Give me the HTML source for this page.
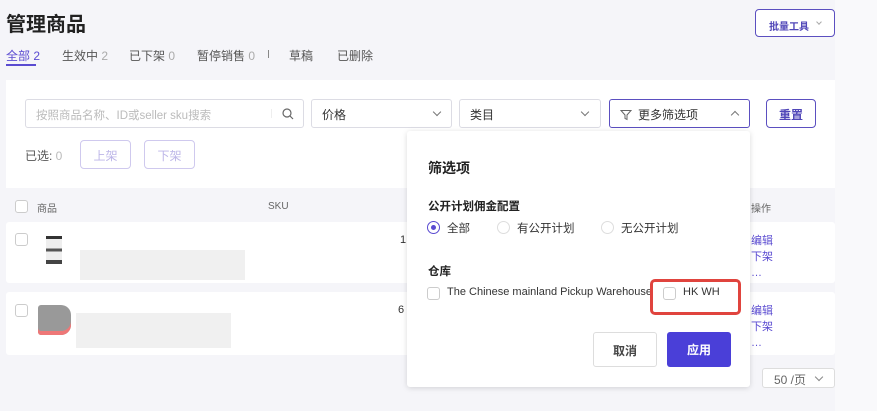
<!DOCTYPE html>
<html><head><meta charset="utf-8"><style>
*{box-sizing:border-box;margin:0;padding:0}
body{width:877px;height:411px;background:#f5f5f9;font-family:"Liberation Sans","Noto Sans CJK SC",sans-serif;color:#333;position:relative;overflow:hidden;font-size:12px}
.a{position:absolute;white-space:nowrap}
.box{position:absolute;border:1px solid #dcdce4;border-radius:3px;background:#fff}
.chev{position:absolute;width:6px;height:6px;border-right:1px solid #777;border-bottom:1px solid #777;transform:rotate(45deg)}
.cb{position:absolute;width:13px;height:13px;border:1px solid #ccc;border-radius:3px;background:#fff}
.purple{color:#5a4bd1}
</style></head><body>
<div class="a" style="left:835px;top:0;width:42px;height:411px;background:#f9f9fb"></div>
<div class="a" style="left:6px;top:8px;font-size:20px;font-weight:bold;color:#222">管理商品</div>
<div class="a" style="left:755px;top:9px;width:80px;height:28px;border:1px solid #5b4fc0;border-radius:4px;background:#fff;color:#5046b8;font-size:10px;font-weight:bold;padding:8px 0 0 13px">批量工具</div>
<span class="chev" style="left:817px;top:20px;width:4px;height:4px;border-color:#aaa"></span>
<div class="a" style="top:47px;left:6px;font-size:12px;color:#5a4bd1">全部<span style="color:#5a4bd1"> 2</span></div>
<div class="a" style="left:6px;top:64px;width:30px;height:2px;background:#5a4bd1"></div>
<div class="a" style="top:47px;left:62px;color:#555">生效中<span style="color:#aaa"> 2</span></div>
<div class="a" style="top:47px;left:129px;color:#555">已下架<span style="color:#aaa"> 0</span></div>
<div class="a" style="top:47px;left:197px;color:#555">暂停销售<span style="color:#aaa"> 0</span></div>
<div class="a" style="top:50px;left:268px;width:1px;height:8px;background:#888"></div>
<div class="a" style="top:47px;left:289px;color:#555">草稿</div>
<div class="a" style="top:47px;left:337px;color:#555">已删除</div>

<div class="a" style="left:6px;top:80px;width:829px;height:108px;background:#fff"></div>
<div class="box" style="left:25px;top:99px;width:279px;height:29px"><span class="a" style="left:10px;top:7px;color:#bbb;font-size:11.5px">按照商品名称、ID或seller sku搜索</span>
<span class="a" style="left:245px;top:9px;width:1px;height:9px;background:#eee"></span>
<svg class="a" style="left:256px;top:8px" width="12" height="12" viewBox="0 0 12 12" fill="none" stroke="#666" stroke-width="1.2"><circle cx="5" cy="5" r="4"/><path d="M8 8l3 3"/></svg></div>
<div class="box" style="left:311px;top:99px;width:141px;height:29px"><span class="a" style="left:10px;top:6px">价格</span><span class="chev" style="left:122px;top:9px"></span></div>
<div class="box" style="left:459px;top:99px;width:142px;height:29px"><span class="a" style="left:10px;top:6px">类目</span><span class="chev" style="left:122px;top:9px"></span></div>
<div class="box" style="left:609px;top:99px;width:141px;height:29px;border-color:#5b4fc0"><svg class="a" style="left:10px;top:9px" width="12" height="12" viewBox="0 0 12 12" fill="none" stroke="#666" stroke-width="1"><path d="M1 1.5h10L7 6v4.5L5 9.5V6z"/></svg><span class="a" style="left:28px;top:6px">更多筛选项</span><span class="chev" style="left:122px;top:12px;transform:rotate(225deg)"></span></div>
<div class="a" style="left:766px;top:99px;width:50px;height:29px;border:1px solid #5b4fc0;border-radius:4px;color:#5046b8;font-weight:bold;text-align:center;padding-top:6px">重置</div>
<div class="a" style="left:25px;top:147px;color:#555">已选: <span style="color:#bbb">0</span></div>
<div class="a" style="left:80px;top:140px;width:51px;height:29px;border:1px solid #cfc9ee;border-radius:4px;color:#bdb6e8;text-align:center;padding-top:6px">上架</div>
<div class="a" style="left:144px;top:140px;width:51px;height:29px;border:1px solid #cfc9ee;border-radius:4px;color:#bdb6e8;text-align:center;padding-top:6px">下架</div>

<div class="cb" style="left:15px;top:200px"></div>
<div class="a" style="left:37px;top:200px;color:#666;font-size:10px">商品</div>
<div class="a" style="left:268px;top:201px;color:#666;font-size:10px">SKU</div>
<div class="a" style="left:751px;top:200px;color:#666;font-size:10px">操作</div>

<div class="a" style="left:6px;top:222px;width:829px;height:61px;background:#fff;border-radius:3px"></div>
<div class="a" style="left:6px;top:292px;width:829px;height:63px;background:#fff;border-radius:3px"></div>
<div class="cb" style="left:15px;top:233px"></div>
<div class="cb" style="left:15px;top:304px"></div>
<div class="a" style="left:46px;top:236px;width:16px;height:28px;background:linear-gradient(#333 0 10%,#eee 10% 45%,#555 45% 55%,#eee 55% 85%,#444 85%)"></div>
<div class="a" style="left:80px;top:250px;width:165px;height:30px;background:#f0f0f0"></div>
<div class="a" style="left:38px;top:305px;width:33px;height:30px;background:#999;border-radius:3px 10px 10px 3px;box-shadow:inset 0 -4px 0 #e77"></div>
<div class="a" style="left:76px;top:313px;width:155px;height:35px;background:#f0f0f0"></div>
<div class="a" style="left:400px;top:234px;font-size:11px">1</div>
<div class="a" style="left:398px;top:304px;font-size:11px">6</div>
<div class="a purple" style="left:751px;top:233px;line-height:16px;font-size:11px">编辑<br>下架<br>…</div>
<div class="a purple" style="left:751px;top:303px;line-height:16px;font-size:11px">编辑<br>下架<br>…</div>

<div class="a" style="left:762px;top:368px;width:73px;height:20px;background:#fff;border:1px solid #ddd;border-radius:3px;color:#666;padding:2px 0 0 11px">50 /页</div>
<span class="chev" style="left:816px;top:374px;border-color:#888"></span>

<div class="a" style="left:407px;top:131px;width:343px;height:256px;background:#fff;border-radius:3px;box-shadow:0 1px 6px rgba(0,0,0,.15)">
<div class="a" style="left:21px;top:27px;font-size:14px;font-weight:bold;color:#222">筛选项</div>
<div class="a" style="left:21px;top:67px;font-weight:bold;color:#222;font-size:11.5px">公开计划佣金配置</div>
<div class="a" style="left:20px;top:90px;width:13px;height:13px;border:1px solid #5a4bd1;border-radius:50%"><div style="margin:3px;width:5px;height:5px;border-radius:50%;background:#5a4bd1"></div></div>
<div class="a" style="left:40px;top:89px;font-size:11.5px">全部</div>
<div class="a" style="left:90px;top:90px;width:13px;height:13px;border:1px solid #ddd;border-radius:50%"></div>
<div class="a" style="left:110px;top:89px;font-size:11.5px">有公开计划</div>
<div class="a" style="left:194px;top:90px;width:13px;height:13px;border:1px solid #ddd;border-radius:50%"></div>
<div class="a" style="left:214px;top:89px;font-size:11.5px">无公开计划</div>
<div class="a" style="left:21px;top:132px;font-weight:bold;color:#222;font-size:11.5px">仓库</div>
<div class="cb" style="left:20px;top:156px"></div>
<div class="a" style="left:40px;top:155px;font-size:11px;color:#333">The Chinese mainland Pickup Warehouse</div>
<div class="a" style="left:243px;top:148px;width:91px;height:36px;border:3px solid #e0443e;border-radius:5px"></div>
<div class="cb" style="left:256px;top:156px"></div>
<div class="a" style="left:276px;top:155px;font-size:11px">HK WH</div>
<div class="a" style="left:186px;top:201px;width:64px;height:35px;border:1px solid #ddd;border-radius:3px;text-align:center;padding-top:9px;font-weight:bold;color:#444">取消</div>
<div class="a" style="left:260px;top:201px;width:64px;height:35px;background:#4a3fd8;border-radius:3px;text-align:center;padding-top:9px;font-weight:bold;color:#fff">应用</div>
</div>
</body></html>
